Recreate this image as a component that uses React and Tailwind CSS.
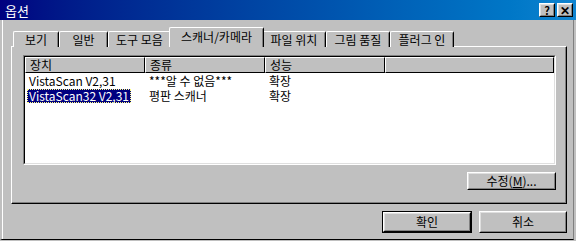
import React from 'react'

const font = { fontFamily: '"Noto Sans CJK KR", "Liberation Sans", sans-serif' }

function Raised({ className = '', children }) {
  return (
    <div className={`border border-t-white border-l-white border-r-black border-b-black ${className}`}>
      <div className="h-full w-full border border-t-[#dfdfdf] border-l-[#dfdfdf] border-r-[#808080] border-b-[#808080] flex items-center justify-center">
        {children}
      </div>
    </div>
  )
}

function Tab({ label, w, selected }) {
  if (selected) {
    return (
      <div
        className={`relative z-10 -mx-[2px] h-[20px] bg-[#c0c0c0] border-t border-l border-white border-r border-r-black rounded-t-[2px] flex items-start justify-center pt-[1px] text-[12px] leading-[15px] ${w}`}
      >
        <span className="border-r border-r-[#808080] absolute right-0 top-[1px] bottom-0"></span>
        {label}
      </div>
    )
  }
  return (
    <div
      className={`relative h-[16px] mt-[4px] bg-[#c0c0c0] border-t border-l border-white border-r border-r-black rounded-t-[2px] flex items-start justify-center text-[12px] leading-[15px] ${w}`}
    >
      <span className="border-r border-r-[#808080] absolute right-0 top-[1px] bottom-0"></span>
      {label}
    </div>
  )
}

export default function App() {
  const tabs = [
    { label: '보기', w: 'w-[46px]' },
    { label: '일반', w: 'w-[49px]' },
    { label: '도구 모음', w: 'w-[63px]' },
    { label: '스캐너/카메라', w: 'w-[95px]', selected: true },
    { label: '파일 위치', w: 'w-[64px]' },
    { label: '그림 품질', w: 'w-[64px]' },
    { label: '플러그 인', w: 'w-[64px]' },
  ]
  const rows = [
    ['VistaScan V2,31', '***알 수 없음***', '확장'],
    ['VistaScan32 V2,31', '평판 스캐너', '확장'],
  ]

  return (
    <div style={font} className="w-[576px] h-[241px] bg-[#c0c0c0] overflow-hidden text-black">
      <div className="w-[574px] h-[240px] border-l-2 border-l-[#c0c0c0] border-r border-r-[#808080] border-b border-b-black relative">
        {/* title bar */}
        <div className="absolute left-[-2px] top-0 w-[576px] h-[20px] bg-gradient-to-r from-[#000080] to-[#1084d0] flex items-center pl-[5px] pr-[3px]">
          <span className="text-white text-[13px] leading-none">옵션</span>
          <div className="ml-auto flex gap-[2px]">
            <Raised className="w-[16px] h-[14px] bg-[#c0c0c0]">
              <span className="text-[11px] font-bold leading-none">?</span>
            </Raised>
            <Raised className="w-[16px] h-[14px] bg-[#c0c0c0]">
              <span className="text-[12px] font-bold leading-none">✕</span>
            </Raised>
          </div>
        </div>

        <div className="h-full border-l border-l-white pt-[27px]">
          {/* tabs */}
          <div className="flex items-start pl-[10px] h-[20px]">
            {tabs.map((t) => (
              <Tab key={t.label} {...t} />
            ))}
          </div>

          {/* panel */}
          <div className="ml-[8px] w-[556px] h-[158px] border-t border-l border-white border-r border-b border-r-black border-b-black -mt-[1px]">
            <div className="h-full border-r border-b border-r-[#808080] border-b-[#808080] pt-[8px] pl-[11px] pr-[9px]">
              {/* list view */}
              <div className="w-[533px] h-[110px] border border-t-[#808080] border-l-[#808080] border-r-white border-b-white">
                <div className="h-full border border-t-black border-l-black border-r-[#dfdfdf] border-b-[#dfdfdf] bg-white">
                  <div className="flex h-[16px] text-[12px] leading-[14px]">
                    {['장치', '종류', '성능', ''].map((h, i) => (
                      <div
                        key={i}
                        className={`bg-[#c0c0c0] border-t border-l border-white border-r border-b border-r-black border-b-black pl-[4px] ${i === 3 ? 'flex-1' : 'w-[120px]'}`}
                      >
                        {h}
                      </div>
                    ))}
                  </div>
                  <div className="text-[12px] leading-[15px]">
                    {rows.map((r, i) => (
                      <div key={i} className="flex h-[15px]">
                        <div className="w-[120px] pl-[2px]">
                          <span
                            className={
                              i === 1
                                ? 'inline-block bg-[#000080] text-white outline-1 outline-dotted outline-[#ffff80] -outline-offset-1 px-[2px] leading-[14px]'
                                : 'inline-block px-[2px]'
                            }
                          >
                            {r[0]}
                          </span>
                        </div>
                        <div className="w-[120px] pl-[4px]">{r[1]}</div>
                        <div className="w-[120px] pl-[4px]">{r[2]}</div>
                      </div>
                    ))}
                  </div>
                </div>
              </div>
              <div className="flex justify-end mt-[7px]">
                <Raised className="w-[89px] h-[18px] bg-[#c0c0c0]">
                  <span className="text-[12px] leading-none">
                    수정(<span className="underline">M</span>)...
                  </span>
                </Raised>
              </div>
            </div>
          </div>

          {/* bottom buttons */}
          <div className="flex justify-end gap-[7px] mt-[7px] pr-[6px]">
            <div className="w-[90px] h-[22px] border border-black">
              <Raised className="w-full h-full bg-[#c0c0c0]">
                <span className="text-[12px] leading-none">확인</span>
              </Raised>
            </div>
            <Raised className="w-[88px] h-[22px] bg-[#c0c0c0]">
              <span className="text-[12px] leading-none">취소</span>
            </Raised>
          </div>
        </div>
      </div>
    </div>
  )
}
